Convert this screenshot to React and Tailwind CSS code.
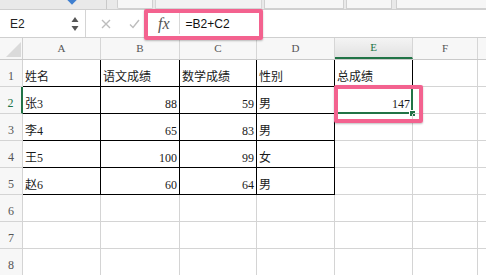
import React from 'react';

const serif = "font-['Liberation_Serif','Noto_Sans_CJK_SC',serif]";

// column widths include the right border
const COLS = [
  { key: 'A', w: 'w-[78px]' },
  { key: 'B', w: 'w-[79px]' },
  { key: 'C', w: 'w-[77px]' },
  { key: 'D', w: 'w-[78px]' },
  { key: 'E', w: 'w-[78px]' },
  { key: 'F', w: 'w-[65px]' },
  { key: 'G', w: 'w-[40px]' },
];

const ROWS = [
  ['姓名', '语文成绩', '数学成绩', '性别', '总成绩'],
  ['张3', 88, 59, '男', 147],
  ['李4', 65, 83, '男'],
  ['王5', 100, 99, '女'],
  ['赵6', 60, 64, '男'],
  [],
  [],
  [],
];

function cellBorder(r, c) {
  if (r < 5 && c < 4) return 'border-r border-b border-r-black border-b-black';
  if (r === 0 && c === 4) return 'border-r border-b border-r-black border-b-[#d4d4d4]';
  return 'border-r border-b border-[#d4d4d4]';
}

function Toolbar() {
  return (
    <div className="h-[9px] bg-[#e9e9e9] flex items-stretch relative">
      <div className="w-[107px] border-r border-[#c9c9c9] relative">
        <div className="absolute left-[68px] -top-[5px] w-[8px] h-[8px] rotate-45 bg-[#3f7fd0]" />
      </div>
      <div className="w-[10px]" />
      <div className="w-[36px] bg-[#f6f6f6] border-x border-b border-[#d0d0d0] rounded-b-[2px]" />
      <div className="w-[2px]" />
      <div className="w-[107px] bg-[#f2f2f2] border-x border-b border-[#d6d6d6]" />
      <div className="w-[2px]" />
      <div className="w-[80px] bg-[#f6f6f6] border-x border-b border-[#d0d0d0]" />
      <div className="w-[2px]" />
      <div className="w-[46px] bg-[#f6f6f6] border-x border-b border-[#d0d0d0]" />
      <div className="w-[4px]" />
      <div className="flex-1 bg-[#f6f6f6] border-l border-b border-[#d0d0d0]" />
    </div>
  );
}

function FormulaBar() {
  return (
    <div className="h-[29px] bg-white border-t border-b border-[#cfcfcf] flex items-center font-['Liberation_Sans',sans-serif]">
      <div className="w-[86px] h-full border-r border-[#d4d4d4] flex items-center justify-between pl-[10px] pr-[6px]">
        <span className="text-[12px] text-[#222]">E2</span>
        <svg width="8" height="16" viewBox="0 0 8 16">
          <path d="M4 1 L7.5 6 L0.5 6 Z" fill="#555" />
          <path d="M4 15 L7.5 10 L0.5 10 Z" fill="#555" />
        </svg>
      </div>
      <div className="w-[61px] h-full flex items-center pl-[15px] gap-[18px]">
        <svg width="10" height="10" viewBox="0 0 10 10">
          <path d="M1 1 L9 9 M9 1 L1 9" stroke="#bdbdbd" strokeWidth="1.4" />
        </svg>
        <svg width="11" height="10" viewBox="0 0 11 10">
          <path d="M1 5.5 L4 8.5 L10 1" stroke="#bdbdbd" strokeWidth="1.4" fill="none" />
        </svg>
      </div>
      <div className="h-full flex items-center pl-[11px]">
        <span className={"italic text-[16px] text-[#555] " + serif}>fx</span>
      </div>
      <div className="w-px h-[21px] bg-[#d8d8d8] ml-[9px]" />
      <span className="ml-[6px] text-[12px] text-[#111]">=B2+C2</span>
    </div>
  );
}

function HeaderRow() {
  return (
    <div className={"h-[22px] flex bg-[#f7f7f7] border-b border-[#cacaca] " + serif}>
      <div className="w-[23px] shrink-0 border-r border-[#d0d0d0] relative">
        <svg className="absolute left-[6px] top-[4px]" width="15" height="15" viewBox="0 0 15 15">
          <path d="M15 0 L15 15 L0 15 Z" fill="#dadada" />
        </svg>
      </div>
      {COLS.map((c) =>
        c.key === 'E' ? (
          <div
            key={c.key}
            className={c.w + ' shrink-0 border-r border-[#d6d6d6] border-b-2 border-b-[#217346] bg-gradient-to-b from-[#f4f4f4] to-[#e2e2e2] flex items-center justify-center text-[11px] text-[#217346]'}
          >
            {c.key}
          </div>
        ) : (
          <div
            key={c.key}
            className={c.w + ' shrink-0 border-r border-[#d6d6d6] flex items-center justify-center text-[11px] text-[#555]'}
          >
            {c.key === 'G' ? '' : c.key}
          </div>
        )
      )}
    </div>
  );
}

function Row({ r, data }) {
  const active = r === 1;
  return (
    <div className={"h-[27px] flex " + serif}>
      <div
        className={
          active
            ? 'w-[23px] shrink-0 bg-[#f7f7f7] border-r-2 border-r-[#217346] border-b border-b-[#d4d4d4] flex items-end justify-center pb-[1px] text-[12px] text-[#217346]'
            : 'w-[23px] shrink-0 bg-[#f7f7f7] border-r border-b border-[#d4d4d4] flex items-end justify-center pb-[1px] text-[12px] text-[#555]'
        }
      >
        {r + 1}
      </div>
      {COLS.map((c, ci) => {
        const v = data[ci];
        const num = typeof v === 'number';
        return (
          <div
            key={c.key}
            className={
              c.w +
              ' shrink-0 relative flex items-end px-[2px] pb-[1px] text-[12px] leading-[15px] text-[#1a1a1a] ' +
              (num ? 'justify-end ' : 'justify-start ') +
              cellBorder(r, ci)
            }
          >
            {v}
            {active && ci === 4 && (
              <>
                <div className="absolute -left-[1px] -top-[1px] -right-[1px] -bottom-[1px] border-2 border-[#217346]" />
                <div className="absolute -right-[4px] -bottom-[4px] w-[7px] h-[7px] bg-[#217346] border border-white" />
              </>
            )}
          </div>
        );
      })}
    </div>
  );
}

export default function App() {
  return (
    <div className="relative w-[486px] h-[275px] overflow-hidden bg-white">
      <Toolbar />
      <FormulaBar />
      <HeaderRow />
      {ROWS.map((d, i) => (
        <Row key={i} r={i} data={d} />
      ))}
      {/* highlight boxes drawn over the screenshot */}
      <div className="absolute left-[144px] top-[9px] w-[119px] h-[31px] border-[4px] border-[#f3628f] rounded-[2px] shadow-[0_1px_2px_rgba(0,0,0,0.25)]" />
      <div className="absolute left-[334px] top-[85px] w-[89px] h-[38px] border-[4px] border-[#f3628f] rounded-[2px] shadow-[0_1px_2px_rgba(0,0,0,0.25)]" />
    </div>
  );
}
